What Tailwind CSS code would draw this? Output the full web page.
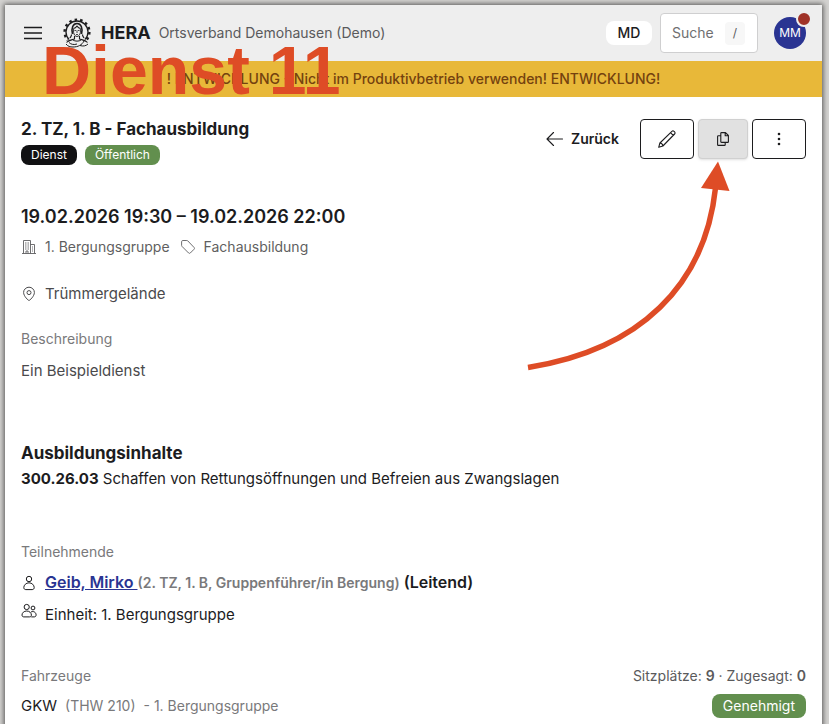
<!DOCTYPE html>
<html lang="de">
<head>
    <meta charset="UTF-8">
    <meta name="viewport" content="width=device-width, initial-scale=1.0">
    <title>2. TZ, 1. B - Fachausbildung - HERA</title>
    <script src="https://cdn.jsdelivr.net/npm/@tailwindcss/browser@4"></script>
</head>
<body class="relative min-h-screen overflow-x-hidden bg-[#d3d2d0] font-['Inter',sans-serif] text-base text-[#1c1c1e]">
    <div class="pt-[5px] pr-[7px] pl-[5px]">
        <div class="min-h-screen bg-white shadow-[0_0_5px_1px_rgba(0,0,0,0.6)]">
            <header class="flex h-14 items-center bg-[#eeeeee] px-4">
                <button type="button" aria-label="Menü" class="flex size-6 items-center justify-center">
                    <svg class="size-6" viewBox="0 0 24 24" fill="none" stroke="#1c1c1e" stroke-width="1.3">
                        <path d="M3 6.500h18M3 12h18M3 17.500h18"/>
                    </svg>
                </button>
                <a href="#" class="ml-4 flex items-center">
                    <svg class="h-[30px] w-8" viewBox="0 0 32 30" fill="none" stroke="#1c1c1e">
                        <!-- gear -->
                        <circle cx="16" cy="14" r="12.4" stroke-width="2.4" stroke-dasharray="2.5 3.065"/>
                        <circle cx="16" cy="14" r="11" stroke-width="1.3"/>
                        <!-- bust -->
                        <path d="M9 21c-3 1-4.500 3-5 6c3 2.500 21 2.500 24 0c-.5-3-2-5-5-6l-3-1h-8z" fill="#eeeeee" stroke="none"/>
                        <path d="M11.500 16c-1.500-6 .5-10.500 4.500-10.500s6 4.500 4.500 10.500" stroke-width="1.600"/>
                        <path d="M12.600 10.500c1.300-.3 2.300-1 3.400-2.300c1.100 1.300 2.100 2 3.400 2.300" stroke-width="1.100"/>
                        <path d="M12.600 10.500v4c.3 2.200 1.800 4 3.400 4s3.100-1.800 3.400-4v-4" stroke-width=".9"/>
                        <path d="M13.500 12.500h1.700M16.800 12.500h1.700M16 12.500v2.500M15 16.500h2" stroke-width=".8"/>
                        <path d="M13.500 18v3c-3 1-6 1.300-8 3.500M18.500 18v3c3 1 6 1.300 8 3.500" stroke-width="1.100"/>
                        <path d="M10.500 16.500c0 2-1 2.500-1.500 3.500M21.500 16.500c0 2 1 2.500 1.500 3.500" stroke-width="1.200"/>
                        <path d="M5 26c2 2.500 4 3 7 3c5 0 9-2 11-6M8 24.500c2 2 5 2.500 8 1.500M19 27.500c3 1 6 .5 8-1.500M12 22c2 1.500 6 1.500 8 0" stroke-width="1"/>
                    </svg>
                    <span class="ml-2 text-lg leading-6 font-bold">HERA</span>
                </a>
                <span class="ml-2 text-sm text-[#5a5a5c]">Ortsverband Demohausen (Demo)</span>
                <div class="ml-auto flex items-center">
                    <button type="button" class="h-6 w-[46px] rounded-lg bg-white text-sm font-medium">MD</button>
                    <label class="ml-2 flex h-10 w-[98px] items-center rounded border border-[#cfcfd0] bg-white pr-3 pl-[11px]">
                        <input type="text" aria-label="Suche" placeholder="Suche" class="w-0 min-w-0 flex-1 text-sm outline-none placeholder:text-[#6f6f71]">
                        <kbd class="flex h-[23px] w-5 items-center justify-center rounded bg-[#f7f7f7] font-['Inter',sans-serif] text-xs text-[#5a5a5c]">/</kbd>
                    </label>
                    <button type="button" class="relative ml-4 size-8 rounded-full bg-[#2a3492] text-xs text-white">
                        MM
                        <span class="absolute -top-1.5 -right-1.5 size-4 rounded-full border-2 border-[#eeeeee] bg-[#a03328]"></span>
                    </button>
                </div>
            </header>

            <div class="flex h-9 items-center justify-center bg-[#e8b839] text-sm font-medium text-[#74420f]">
                ! ENTWICKLUNG - Nicht im Produktivbetrieb verwenden! ENTWICKLUNG!
            </div>

            <main class="px-4 pt-5 leading-6">
                <div class="flex items-start justify-between">
                    <div>
                        <h1 class="text-[17px] leading-6 font-bold">2. TZ, 1. B - Fachausbildung</h1>
                        <div class="mt-1 flex gap-2 text-xs leading-5 text-white">
                            <span class="rounded-lg bg-[#111113] px-2.5">Dienst</span>
                            <span class="rounded-lg bg-[#628f4e] px-2.5">Öffentlich</span>
                        </div>
                    </div>
                    <div class="mt-0.5 flex items-center gap-1">
                        <a href="#" class="mr-[17px] flex items-center gap-2 text-sm font-semibold">
                            <svg class="h-4 w-[17px]" viewBox="0 0 17 16" fill="none" stroke="currentColor" stroke-width="1.1" stroke-linecap="round" stroke-linejoin="round">
                                <path d="M16.500 8H1M7.500 1.500L1 8l6.500 6.500"/>
                            </svg>
                            Zurück
                        </a>
                        <button type="button" aria-label="Bearbeiten" class="flex h-10 w-[54px] items-center justify-center rounded border border-[#1c1c1e]">
                            <svg class="size-[18px]" viewBox="0 0 18 18" fill="none" stroke="currentColor" stroke-width="1.1" stroke-linejoin="round">
                                <path d="M.7 17.300l1.200-4.300L13.900 1.300c.6-.6 1.500-.6 2.100 0l.6.600c.6.600.6 1.500 0 2.100L4.900 16zM1.900 13c1.600.2 2.800 1.400 3 3M12.500 2.700l2.700 2.700"/>
                            </svg>
                        </button>
                        <button type="button" aria-label="Kopieren" class="flex h-10 w-[50px] items-center justify-center rounded border border-[#d0d0d0] bg-[#e1e1e1] shadow-sm">
                            <svg class="h-[14px] w-3" viewBox="0 0 12 14" fill="none" stroke="currentColor" stroke-width="1.1" stroke-linejoin="round">
                                <path d="M4.500.6h4l2.900 2.900v6.200c0 .4-.3.700-.7.700H4.500c-.4 0-.7-.3-.7-.7V1.300c0-.4.300-.7.700-.7zM8.200.6v3.200h3.200M3.800 3.800H1.300c-.4 0-.7.300-.7.700v8.200c0 .4.300.7.700.7h6.200c.4 0 .7-.3.700-.7v-2.300"/>
                            </svg>
                        </button>
                        <button type="button" aria-label="Mehr" class="flex h-10 w-[54px] items-center justify-center rounded border border-[#1c1c1e]">
                            <svg class="h-4 w-1" viewBox="0 0 4 16" fill="currentColor">
                                <circle cx="2" cy="3" r="1.3"/>
                                <circle cx="2" cy="8" r="1.3"/>
                                <circle cx="2" cy="13" r="1.3"/>
                            </svg>
                        </button>
                    </div>
                </div>

                <h2 class="mt-10 text-lg leading-6 font-semibold">19.02.2026 19:30 – 19.02.2026 22:00</h2>
                <div class="mt-2 flex items-center text-sm text-[#5f5f61]">
                    <svg class="size-4" viewBox="0 0 16 16" fill="none" stroke="currentColor" stroke-width=".9">
                        <path d="M1 14.500h14M2.500 14.500v-13h7v13M9.500 5.500h4v9M5 14.500v-2.500h2v2.500"/>
                        <path d="M4.500 3.500v7.500M7.500 3.500v7.500M6 3.500v7.500M11.500 7.500v6" stroke-dasharray="1 1"/>
                    </svg>
                    <span class="ml-2">1. Bergungsgruppe</span>
                    <svg class="ml-2.5 size-4" viewBox="0 0 16 16" fill="none" stroke="currentColor" stroke-width=".9" stroke-linejoin="round">
                        <path d="M2.800 1.500h4c.4 0 .7.100 1 .4l6.300 6.600c.5.500.5 1.200 0 1.700l-3.800 3.800c-.5.500-1.200.5-1.700 0L2 7.400c-.3-.3-.4-.6-.4-1V2.700c0-.7.500-1.200 1.200-1.200z"/>
                    </svg>
                    <span class="ml-2">Fachausbildung</span>
                </div>

                <div class="mt-[25px] flex items-center text-[15px] leading-6 text-[#4a4a4c]">
                    <svg class="mr-2 size-4" viewBox="0 0 16 16" fill="none" stroke="currentColor" stroke-width="1">
                        <path d="M8 14.500c-.7 0-5.400-4.300-5.400-8a5.400 5.300 0 0 1 10.800 0c0 3.700-4.700 8-5.400 8z"/>
                        <circle cx="8" cy="6.600" r="2"/>
                    </svg>
                    Trümmergelände
                </div>

                <h3 class="mt-[23px] text-sm leading-5 text-[#79797b]">Beschreibung</h3>
                <p class="mt-2.5 text-[15px] leading-6 text-[#4a4a4c]">Ein Beispieldienst</p>

                <h2 class="mt-14 text-[17px] leading-7 font-bold">Ausbildungsinhalte</h2>
                <p class="text-[15px] leading-6"><b class="font-bold">300.26.03</b> Schaffen von Rettungsöffnungen und Befreien aus Zwangslagen</p>

                <h3 class="mt-[51px] text-sm leading-5 text-[#79797b]">Teilnehmende</h3>
                <ul class="mt-2 space-y-2 leading-6">
                    <li class="flex items-center">
                        <svg class="mr-2 size-4" viewBox="0 0 16 16" fill="none" stroke="currentColor" stroke-width="1">
                            <circle cx="8" cy="4" r="2.700"/>
                            <path d="M8 7.800c-3 0-5.200 2.400-5.200 4.700c0 1.300.8 2.100 2 2.100h6.400c1.200 0 2-.8 2-2.100c0-2.300-2.200-4.700-5.200-4.700z"/>
                        </svg>
                        <div class="font-semibold whitespace-pre"><a href="#" class="text-[#2a3492] underline">Geib, Mirko </a><span class="text-sm leading-6 text-[#79797b]">(2. TZ, 1. B, Gruppenführer/in Bergung)</span> (Leitend)</div>
                    </li>
                    <li class="flex items-start text-[15px]">
                        <svg class="mr-2 size-4" viewBox="0 0 16 16" fill="none" stroke="currentColor" stroke-width="1">
                            <circle cx="5.700" cy="4" r="2.600"/>
                            <circle cx="12" cy="5" r="1.900"/>
                            <path d="M5.700 8c-2.700 0-4.700 1.900-4.700 4c0 1.200.7 1.900 1.800 1.900h5.800c1.100 0 1.800-.7 1.800-1.900c0-2.100-2-4-4.700-4zM10 9c2.500-1.300 5.100.4 5.100 2.900c0 1.200-.7 2-1.800 2h-3"/>
                        </svg>
                        <span class="leading-6">Einheit: 1. Bergungsgruppe</span>
                    </li>
                </ul>

                <div class="mt-[39px] flex items-center justify-between text-sm leading-5">
                    <h3 class="text-[#79797b]">Fahrzeuge</h3>
                    <p class="text-[#5a5a5c]">Sitzplätze: <b class="font-semibold">9</b> · Zugesagt: <b class="font-semibold">0</b></p>
                </div>
                <div class="mt-2 flex items-center text-sm leading-6 text-[#79797b]">
                    <span class="text-[15px] text-[#1c1c1e]">GKW</span>
                    <span class="ml-2">(THW 210)</span>
                    <span class="ml-2">- 1. Bergungsgruppe</span>
                    <span class="ml-auto rounded-lg bg-[#628f4e] px-[11px] leading-6 text-white">Genehmigt</span>
                </div>
            </main>
        </div>
    </div>

    <!-- tutorial annotations -->
    <div class="pointer-events-none absolute top-[31px] left-[42px] font-['Liberation_Sans',sans-serif] text-[68px] leading-[78px] font-bold text-[#de4c26]">Dienst 11</div>
    <svg class="pointer-events-none absolute top-[160px] right-[89px] h-[220px] w-[220px]" viewBox="520 160 220 220" fill="none">
        <path d="M528 367.500C640 350 705 285 715.500 188" stroke="#de4c26" stroke-width="5.500"/>
        <path d="M718 161.500L701 188l28.500 3z" fill="#de4c26"/>
    </svg>
</body>
</html>
